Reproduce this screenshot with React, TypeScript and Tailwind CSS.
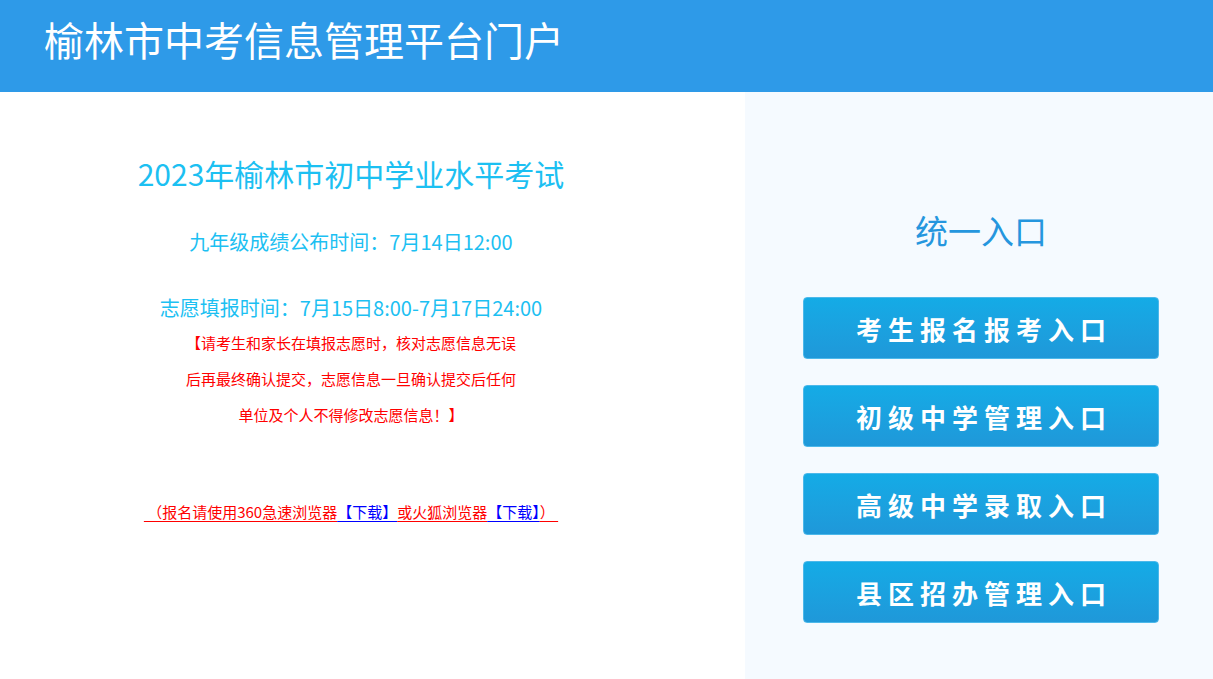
const cjk = { fontFamily: '"Noto Sans CJK SC", "Noto Sans", sans-serif' }

const entries = ['考生报名报考入口', '初级中学管理入口', '高级中学录取入口', '县区招办管理入口']

function Header() {
  return (
    <div className="h-[92px] bg-[#2e9ae8] flex items-center pl-[44px]">
      <h1 className="text-[40px] leading-[48px] text-white font-normal -mt-[14px]">榆林市中考信息管理平台门户</h1>
    </div>
  )
}

function Notice() {
  return (
    <div className="w-[745px] h-full bg-white">
      <div className="w-[702px] flex flex-col items-center text-center">
        <h2 className="mt-[61px] text-[30px] leading-[40px] text-[#1cc0f2]">2023年榆林市初中学业水平考试</h2>
        <p className="mt-[34px] text-[20px] leading-[30px] text-[#1cc0f2]">九年级成绩公布时间：7月14日12:00</p>
        <p className="mt-[36px] text-[20px] leading-[30px] text-[#1cc0f2]">志愿填报时间：7月15日8:00-7月17日24:00</p>
        <div className="mt-[2px] text-[15px] leading-[36px] text-[#ff0000]">
          <p>【请考生和家长在填报志愿时，核对志愿信息无误</p>
          <p>后再最终确认提交，志愿信息一旦确认提交后任何</p>
          <p>单位及个人不得修改志愿信息！】</p>
        </div>
        <p className="mt-[67px] text-[15px] leading-[24px]">
          <span className="text-[#ff0000] underline underline-offset-[3px]">&nbsp;（报名请使用360急速浏览器</span>
          <span className="text-[#0000ff] underline underline-offset-[3px]">【下载】</span>
          <span className="text-[#ff0000] underline underline-offset-[3px]">或火狐浏览器</span>
          <span className="text-[#0000ff] underline underline-offset-[3px]">【下载】</span>
          <span className="text-[#ff0000] underline underline-offset-[3px]">）&nbsp;</span>
        </p>
      </div>
    </div>
  )
}

function Portal() {
  return (
    <div className="flex-1 h-full bg-[#f5faff] flex flex-col items-center pl-[4px]">
      <h3 className="mt-[118px] text-[33px] leading-[40px] text-[#2596de]">统一入口</h3>
      <div className="mt-[47px] flex flex-col gap-[26px]">
        {entries.map((label) => (
          <button
            key={label}
            className="w-[356px] h-[62px] rounded-[4px] bg-gradient-to-b from-[#14abe6] to-[#1f98d9] border border-[#4cb8ea] text-white text-[26px] font-bold tracking-[6px] pl-[6px] flex items-center justify-center"
          >
            {label}
          </button>
        ))}
      </div>
    </div>
  )
}

export default function App() {
  return (
    <div className="w-[1213px] h-[679px] overflow-hidden" style={cjk}>
      <Header />
      <div className="flex h-[587px]">
        <Notice />
        <Portal />
      </div>
    </div>
  )
}
